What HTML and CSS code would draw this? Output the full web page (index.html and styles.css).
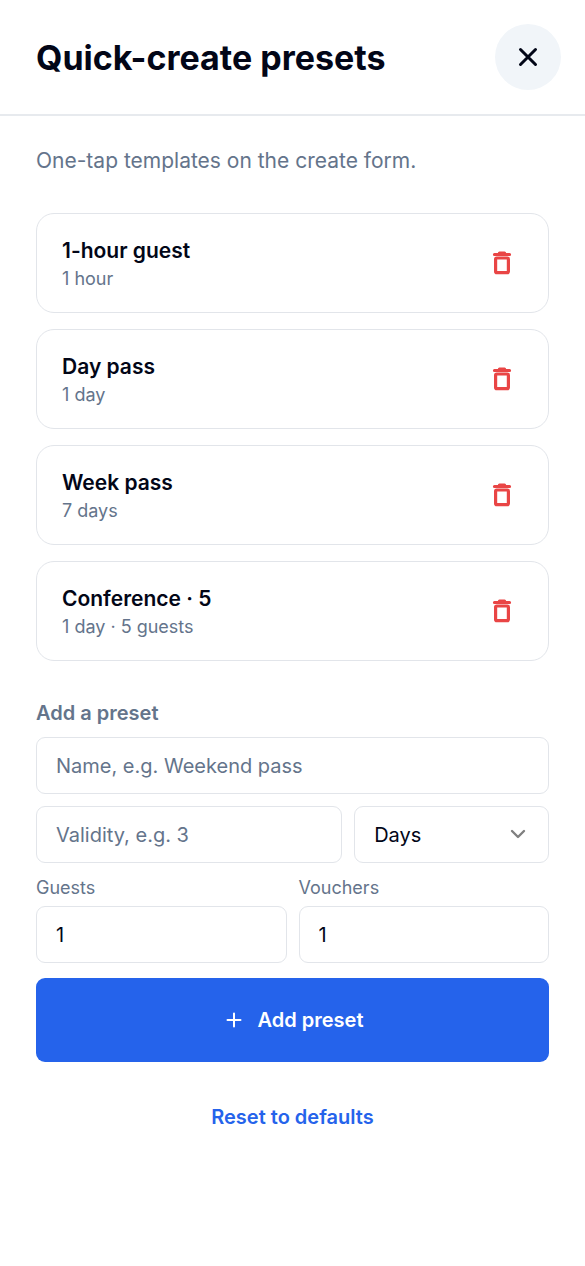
FILE: index.html
```html
<!DOCTYPE html>
<html lang="en">
<head>
<meta charset="utf-8">
<meta name="viewport" content="width=device-width, initial-scale=1">
<title>Quick-create presets</title>
<link rel="stylesheet" href="styles.css">
</head>
<body>
<svg class="sprite" aria-hidden="true">
  <symbol id="trash" viewBox="0 0 20 24">
    <path d="M2.4 3.4h15.2M7.4 2h5.2" fill="none" stroke="currentColor" stroke-width="3" stroke-linecap="round"/>
    <rect x="3.6" y="7" width="12.8" height="14.6" rx="1.2" fill="none" stroke="currentColor" stroke-width="3.2"/>
  </symbol>
</svg>
<header class="header">
  <h1 class="title">Quick-create presets</h1>
  <button class="close" type="button" aria-label="Close">
    <svg class="close-icon" viewBox="0 0 20 20" aria-hidden="true"><path d="M2.5 2.5l15 15M17.5 2.5l-15 15"/></svg>
  </button>
</header>
<main class="content">
  <p class="intro">One-tap templates on the create form.</p>
  <ul class="presets">
    <li class="preset">
      <div class="preset-text"><span class="preset-name">1-hour guest</span><span class="preset-detail">1 hour</span></div>
      <button class="delete" type="button" aria-label="Delete 1-hour guest"><svg class="trash-icon"><use href="#trash"/></svg></button>
    </li>
    <li class="preset">
      <div class="preset-text"><span class="preset-name">Day pass</span><span class="preset-detail">1 day</span></div>
      <button class="delete" type="button" aria-label="Delete Day pass"><svg class="trash-icon"><use href="#trash"/></svg></button>
    </li>
    <li class="preset">
      <div class="preset-text"><span class="preset-name">Week pass</span><span class="preset-detail">7 days</span></div>
      <button class="delete" type="button" aria-label="Delete Week pass"><svg class="trash-icon"><use href="#trash"/></svg></button>
    </li>
    <li class="preset">
      <div class="preset-text"><span class="preset-name">Conference · 5</span><span class="preset-detail">1 day · 5 guests</span></div>
      <button class="delete" type="button" aria-label="Delete Conference · 5"><svg class="trash-icon"><use href="#trash"/></svg></button>
    </li>
  </ul>
  <form class="form">
    <h2 class="form-title">Add a preset</h2>
    <input class="control" type="text" placeholder="Name, e.g. Weekend pass" aria-label="Name">
    <div class="validity">
      <input class="control" type="text" inputmode="numeric" placeholder="Validity, e.g. 3" aria-label="Validity">
      <div class="select-wrap">
        <select class="control select" aria-label="Validity unit">
          <option>Hours</option>
          <option selected>Days</option>
        </select>
        <svg class="chevron" viewBox="0 0 16 10" aria-hidden="true"><path d="M2 2l6 6 6-6"/></svg>
      </div>
    </div>
    <div class="counts">
      <div class="field">
        <label class="label" for="guests">Guests</label>
        <input class="control" id="guests" type="number" min="1" value="1">
      </div>
      <div class="field">
        <label class="label" for="vouchers">Vouchers</label>
        <input class="control" id="vouchers" type="number" min="1" value="1">
      </div>
    </div>
    <button class="submit" type="button">
      <svg class="plus" viewBox="0 0 16 16" aria-hidden="true"><path d="M8 1.5v13M1.5 8h13"/></svg>
      Add preset
    </button>
    <button class="reset" type="button">Reset to defaults</button>
  </form>
</main>
</body>
</html>
```
FILE: styles.css
```css
* {
  box-sizing: border-box;
}

body {
  margin: 0;
  background: #fff;
  color: #020617;
  font-family: Inter, "Liberation Sans", sans-serif;
  font-size: 20px;
  line-height: 28px;
}

button, input, select {
  font: inherit;
}

button {
  border: 0;
  padding: 0;
  background: none;
  cursor: pointer;
}

.sprite {
  display: none;
}

.header {
  display: flex;
  align-items: center;
  justify-content: space-between;
  padding: 24px 24px 24px 36px;
  border-bottom: 2px solid #e7eaee;
}

.title {
  margin: 0;
  padding-top: 2px;
  font-size: 34px;
  line-height: 40px;
  font-weight: 700;
}

.close {
  display: grid;
  place-items: center;
  width: 66px;
  height: 66px;
  border-radius: 50%;
  background: #f1f5f9;
  color: #020617;
}

.close-icon {
  width: 20px;
  height: 20px;
  fill: none;
  stroke: currentColor;
  stroke-width: 3;
  stroke-linecap: round;
}

.content {
  padding: 31px 36px;
}

.intro {
  margin: 0 0 38px;
  color: #64748b;
  font-size: 21px;
}

.presets {
  display: grid;
  gap: 16px;
  margin: 0 0 38px;
  padding: 0;
  list-style: none;
}

.preset {
  display: flex;
  align-items: center;
  justify-content: space-between;
  min-height: 100px;
  padding: 18px 25px;
  border: 1px solid #e2e5ea;
  border-radius: 18px;
}

.preset-text {
  display: grid;
  padding-top: 4px;
}

.preset-name {
  font-size: 21px;
  font-weight: 600;
}

.preset-detail {
  color: #64748b;
  font-size: 18px;
  line-height: 28px;
}

.delete {
  display: grid;
  place-items: center;
  width: 42px;
  height: 42px;
  color: #e94545;
}

.trash-icon {
  width: 20px;
  height: 24px;
}

.form {
  display: grid;
  gap: 12px;
}

.form-title {
  margin: 0 0 -2px;
  color: #64748b;
  font-size: 20px;
  font-weight: 600;
}

.control {
  width: 100%;
  height: 57px;
  padding: 0 19px;
  border: 1px solid #e2e5ea;
  border-radius: 9px;
  background: #fff;
  color: #020617;
  appearance: none;
}

.control::placeholder {
  color: #64748b;
  opacity: 1;
}

.control[type="number"] {
  appearance: textfield;
}

.validity {
  display: grid;
  grid-template-columns: 11fr 7fr;
  gap: 12px;
}

.select-wrap {
  position: relative;
}

.chevron {
  position: absolute;
  top: 23px;
  right: 23px;
  width: 16px;
  height: 10px;
  fill: none;
  stroke: #808080;
  stroke-width: 2.4;
  stroke-linecap: round;
  stroke-linejoin: round;
  pointer-events: none;
}

.counts {
  display: grid;
  grid-template-columns: 1fr 1fr;
  gap: 12px;
}

.field {
  display: grid;
  gap: 5px;
}

.label {
  color: #64748b;
  font-size: 18px;
  line-height: 26px;
}

.submit {
  display: flex;
  align-items: center;
  justify-content: center;
  gap: 16px;
  height: 84px;
  margin-top: 3px;
  padding-left: 4px;
  border-radius: 9px;
  background: #2563eb;
  color: #fff;
  font-weight: 600;
}

.plus {
  width: 16px;
  height: 16px;
  fill: none;
  stroke: currentColor;
  stroke-width: 2;
  stroke-linecap: round;
}

.reset {
  justify-self: center;
  margin-top: 29px;
  color: #2563eb;
  font-weight: 600;
}
```
